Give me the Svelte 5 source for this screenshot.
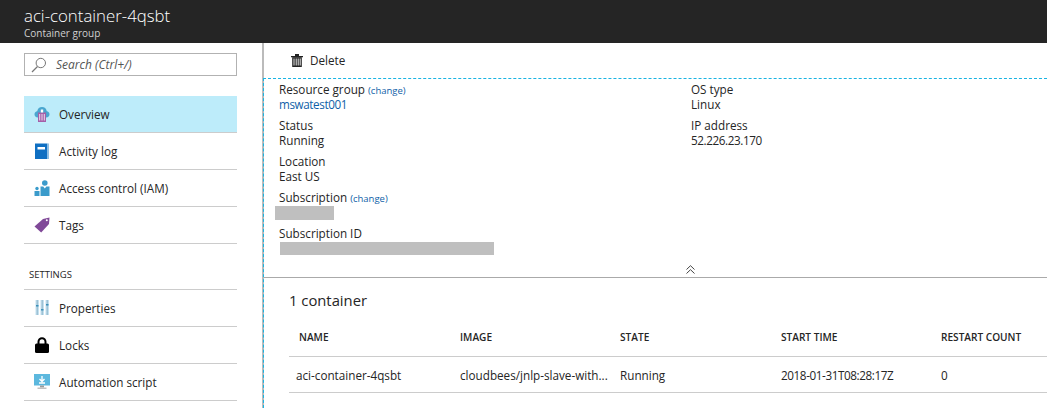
<script lang="ts">
	const menu = [
		{ id: 'overview', label: 'Overview', active: true },
		{ id: 'log', label: 'Activity log' },
		{ id: 'iam', label: 'Access control (IAM)' },
		{ id: 'tags', label: 'Tags' }
	];
	const settings = [
		{ id: 'props', label: 'Properties' },
		{ id: 'locks', label: 'Locks' },
		{ id: 'script', label: 'Automation script' }
	];
	const columns = ['NAME', 'IMAGE', 'STATE', 'START TIME', 'RESTART COUNT'];
	const row = ['aci-container-4qsbt', 'cloudbees/jnlp-slave-with...', 'Running', '2018-01-31T08:28:17Z', '0'];
</script>

{#snippet icon(id)}
	<svg class="icon" viewBox="0 0 16 16" width="16" height="16" aria-hidden="true">
		{#if id === 'overview'}
			<path d="M4 11.500C1.600 11.500.500 10 .500 8.300.500 6.600 1.700 5.400 3.200 5.300 3.600 2.500 5.500 1 8 1s4.400 1.500 4.800 4.300c1.500.1 2.700 1.300 2.700 3 0 1.700-1.100 3.200-3.500 3.200z" fill="#4aa6cf" />
			<path d="M4 6.500h8V16H4z" fill="#a45fa8" />
			<path d="M5.700 8v6.500M8 8v6.500M10.300 8v6.500" stroke="#ecdcee" stroke-width="1" />
			<path d="M6.800 3.500h2.400v3H6.800z" fill="#fff" />
		{:else if id === 'log'}
			<path d="M1 .5h12.500V16H1z" fill="#0f6fc2" />
			<path d="M13.500.5H15V16h-1.500z" fill="#8fbfe4" />
			<path d="M3.500 4h7.500v2.500H3.500z" fill="#fff" />
		{:else if id === 'iam'}
			<circle cx="10.800" cy="3" r="2.800" fill="#3a9bcb" />
			<path d="M6.500 6.500h2.700l1.600 2 1.600-2h3.100V16h-9z" fill="#3a9bcb" />
			<circle cx="3" cy="8.500" r="1.700" fill="#3a9bcb" />
			<path d="M.5 11h5v5h-5z" fill="#3a9bcb" />
		{:else if id === 'tags'}
			<path d="M.5 9.500 9 2l6.500-1.500-.5 6.500-7.800 8.500z" fill="#804998" />
			<circle cx="12.800" cy="3.300" r="1" fill="#fff" />
		{:else if id === 'props'}
			<path d="M1.500 0h3.500v15H1.500zM6.500 0H10v15H6.500zM11.500 0h3.500v15h-3.500z" fill="#c4e2f1" />
			<path d="M3.200 0v15M8.200 0v15M13.200 0v15" stroke="#8db3c7" stroke-width="1" />
			<path d="M2 5h2.500v1.500H2zM7 9h2.500v1.500H7zM12 4h2.500v1.500H12z" fill="#3a8fb8" />
		{:else if id === 'locks'}
			<path d="M4.500 7V4.800a3.500 3.500 0 0 1 7 0V7" fill="none" stroke="#000" stroke-width="2" />
			<rect x="1" y="6.500" width="14" height="9.500" rx="1.500" fill="#000" />
		{:else}
			<rect x="0" y="0" width="16" height="11.500" fill="#5cb8de" />
			<path d="M8 2v5M5.500 5 8 7.500 10.500 5M5 9h6" fill="none" stroke="#fff" stroke-width="1.300" />
			<path d="M6 11.500h4v2H6z" fill="#9a9a9a" />
			<path d="M3.500 13.500h9V15h-9z" fill="#c0c0c0" />
		{/if}
	</svg>
{/snippet}

<div class="page">
	<header class="blade-header">
		<h1>aci-container-4qsbt</h1>
		<p>Container group</p>
	</header>

	<div class="blade">
		<aside class="sidebar">
			<div class="search">
				<svg viewBox="0 0 16 16" width="16" height="16" aria-hidden="true">
					<circle cx="9.800" cy="6" r="4.700" fill="none" stroke="#777" />
					<path d="M6.500 9.500 1 15" stroke="#777" stroke-width="1.200" />
				</svg>
				<span>Search (Ctrl+/)</span>
			</div>

			<nav class="menu">
				{#each menu as item}
					<div class="menu-item" class:active={item.active}>
						{@render icon(item.id)}
						<span>{item.label}</span>
					</div>
				{/each}
			</nav>

			<div class="section-title">SETTINGS</div>
			<nav class="menu">
				{#each settings as item}
					<div class="menu-item">
						{@render icon(item.id)}
						<span>{item.label}</span>
					</div>
				{/each}
			</nav>
		</aside>

		<main class="content">
			<div class="toolbar">
				<svg viewBox="0 0 12 13" width="12" height="13" aria-hidden="true">
					<path d="M0 2h12v1.200H0zM4 0h4v2H4z" fill="#222" />
					<path d="M1.200 3.200h9.600V13H1.200z" fill="#222" />
					<path d="M3 4.500v7M5.200 4.500v7M7.200 4.500v7M9.200 4.500v7" stroke="#fff" stroke-width=".9" />
				</svg>
				<span>Delete</span>
			</div>

			<div class="panel">
				<section class="essentials">
					<div class="col">
						<div class="field">
							<div class="label">Resource group <a class="change">(change)</a></div>
							<a class="value link num">mswatest001</a>
						</div>
						<div class="field">
							<div class="label">Status</div>
							<div class="value">Running</div>
						</div>
						<div class="field">
							<div class="label">Location</div>
							<div class="value">East US</div>
						</div>
						<div class="field">
							<div class="label">Subscription <a class="change">(change)</a></div>
							<div class="redact short"></div>
						</div>
						<div class="field">
							<div class="label">Subscription ID</div>
							<div class="redact long"></div>
						</div>
					</div>
					<div class="col">
						<div class="field">
							<div class="label">OS type</div>
							<div class="value">Linux</div>
						</div>
						<div class="field">
							<div class="label">IP address</div>
							<div class="value num">52.226.23.170</div>
						</div>
					</div>
				</section>

				<div class="collapse">
					<svg viewBox="0 0 9 9" width="9" height="9" aria-hidden="true">
						<path d="M.5 4.500 4.500.7l4 3.800M.5 8.500l4-3.800 4 3.800" fill="none" stroke="#444" />
					</svg>
				</div>

				<section class="containers">
					<h2>1 container</h2>
					<div class="table">
						<div class="tr head">
							{#each columns as c}<div>{c}</div>{/each}
						</div>
						<div class="tr">
							{#each row as c, i}<div class:num={i === 3}>{c}</div>{/each}
						</div>
					</div>
				</section>
			</div>
		</main>
	</div>
</div>

<style>
	:global(body) {
		background: #fff;
		overflow: hidden;
	}

	.page {
		width: 1047px;
		height: 408px;
		overflow: hidden;
		font-family: 'Open Sans', 'Liberation Sans', sans-serif;
		font-size: 11.700px;
		color: #252525;
	}

	.blade-header {
		height: 43px;
		box-sizing: border-box;
		background: #252525;
		color: #fff;
		padding: 5px 0 0 24px;
	}

	h1 {
		margin: 0;
		font-size: 16.800px;
		font-weight: 300;
		line-height: 22px;
	}

	.blade-header p {
		margin: 0;
		font-size: 10px;
		line-height: 12px;
		color: #d0d0d0;
	}

	.blade {
		display: flex;
		height: 365px;
	}

	.sidebar {
		width: 264px;
		flex: none;
		box-sizing: border-box;
		padding: 10px 25px 0 24px;
		border-right: 2px solid #bbb;
	}

	.search {
		height: 23px;
		box-sizing: border-box;
		border: 1px solid #b2b2b2;
		display: flex;
		align-items: center;
		gap: 9px;
		padding-left: 6px;
		font-size: 12px;
		font-style: italic;
		color: #555;
		margin-bottom: 20px;
	}

	.menu-item {
		height: 36px;
		display: flex;
		align-items: center;
		gap: 9px;
		padding-left: 10px;
		border-bottom: 1px solid #ccc;
	}

	.menu-item.active {
		background: #bdecfa;
	}

	.icon {
		flex: none;
	}

	.section-title {
		margin-top: 24px;
		height: 21px;
		padding-left: 5px;
		font-size: 9.500px;
	}

	.section-title + .menu {
		border-top: 1px solid #ccc;
	}

	.content {
		flex: 1;
		min-width: 0;
		height: 365px;
	}

	.toolbar {
		height: 34px;
		padding-bottom: 1px;
		display: flex;
		align-items: center;
		gap: 7px;
		padding-left: 27px;
	}

	.panel {
		margin-left: -1px;
		height: 330px;
		box-sizing: border-box;
		border-top: 1px dashed #19b4e3;
		border-left: 1px dashed #19b4e3;
	}

	.essentials {
		height: 183px;
		box-sizing: border-box;
		display: grid;
		grid-template-columns: 412px 1fr;
		padding: 3px 0 0 15px;
	}

	.field {
		margin-bottom: 6px;
		line-height: 15px;
	}

	.label {
		height: 15px;
	}

	.change {
		font-size: 9.500px;
		color: #0f5fa8;
		margin-left: 0;
	}

	.link {
		display: block;
		color: #0f5fa8;
	}

	.num {
		letter-spacing: -0.4px;
	}

	.redact {
		background: #bfbfbf;
	}

	.redact.short {
		width: 59px;
		height: 14px;
		margin: 1px 0 0 -4px;
	}

	.redact.long {
		width: 214px;
		height: 13px;
		margin: 1px 0 0 1px;
	}

	.collapse {
		height: 15px;
		display: flex;
		justify-content: center;
		align-items: center;
		border-bottom: 1px solid #aaa;
		padding-left: 70px;
	}

	.containers {
		padding: 12px 0 0 25px;
	}

	h2 {
		margin: 0 0 10px;
		font-size: 14.800px;
		font-weight: 400;
		line-height: 20px;
	}

	.tr {
		display: grid;
		grid-template-columns: 164px 160px 161px 160px 1fr;
		border-bottom: 1px solid #ccc;
		height: 35px;
		align-items: center;
		padding-left: 7px;
	}

	.tr.head {
		height: 33px;
		padding-bottom: 3px;
		font-size: 10.100px;
		font-weight: 600;
	}

	.tr.head div:first-child {
		padding-left: 3px;
	}
</style>
